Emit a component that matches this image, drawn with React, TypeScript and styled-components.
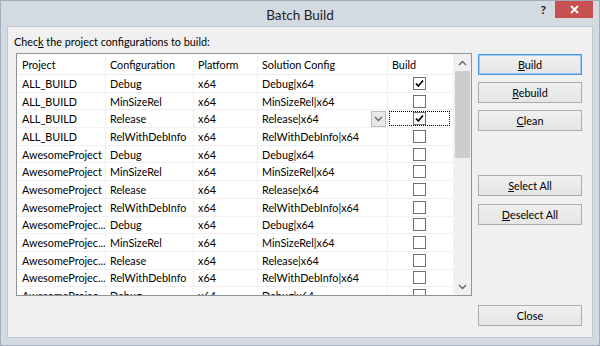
import React from "react";
import styled, { createGlobalStyle } from "styled-components";

type Row = {
  project: string;
  config: string;
  platform: string;
  solution: string;
  build: boolean;
};

const GlobalStyle = createGlobalStyle`
  html, body { margin: 0; padding: 0; background: #fff; }
  body {
    font-family: "Lato", "Segoe UI", sans-serif;
    font-size: 10.8px;
    color: #000;
  }
`;

const Window = styled.div`
  width: 600px;
  height: 346px;
  box-sizing: border-box;
  border: 1px solid #a3adb9;
  background: #d4dae2;
  padding: 0 6px 7px;
  display: flex;
  flex-direction: column;
`;

const TitleBar = styled.div`
  height: 25px;
  flex: none;
  display: grid;
  grid-template-columns: 1fr auto 1fr;
  align-items: start;
`;

const Title = styled.div`
  grid-column: 2;
  font-size: 13.5px;
  line-height: 28px;
  color: #1f1f1f;
`;

const Caption = styled.div`
  grid-column: 3;
  display: flex;
  justify-content: flex-end;
  align-items: flex-start;
`;

const HelpGlyph = styled.span`
  font-size: 12px;
  font-weight: bold;
  line-height: 18px;
  margin-right: 9px;
  color: #222;
`;

const CloseButton = styled.div`
  width: 38px;
  height: 17px;
  background: #c75050;
  display: flex;
  align-items: center;
  justify-content: center;
`;

const Client = styled.div`
  flex: 1;
  border: 1px solid #c2c8d0;
  background: #f0f0f0;
  padding: 7px 0 0 6px;
`;

const Label = styled.div`
  line-height: 16px;
  margin-bottom: 3px;
`;

const Body = styled.div`
  display: flex;
  gap: 6px;
  margin-left: 2px;
`;

const ListBox = styled.div`
  width: 456px;
  height: 243px;
  box-sizing: border-box;
  border: 1px solid #8e939a;
  background: #fff;
  display: flex;
  overflow: hidden;
`;

const Grid = styled.div`
  width: 437px;
  flex: none;
  overflow: hidden;
`;

const HeaderRow = styled.div`
  display: flex;
  height: 21px;
  box-sizing: border-box;
  border-bottom: 1px solid #ececec;
`;

const DataRow = styled.div`
  display: flex;
  height: 17.7px;
  box-sizing: border-box;
  border-bottom: 1px solid #f0f0f0;
  flex: none;
`;

const Cell = styled.div<{ $w: number; $pad?: number }>`
  width: ${(p) => p.$w}px;
  flex: none;
  box-sizing: border-box;
  padding-left: ${(p) => p.$pad ?? 4}px;
  border-right: 1px solid #f0f0f0;
  display: flex;
  align-items: center;
  white-space: nowrap;
  overflow: hidden;
`;

const SolutionCell = styled(Cell)`
  justify-content: space-between;
  padding-right: 1px;
`;

const BuildCell = styled(Cell)`
  padding-left: 1px;
`;

const DropButton = styled.div`
  width: 15px;
  height: 16px;
  box-sizing: border-box;
  border: 1px solid #bcbcbc;
  background: #e8e8e8;
  display: flex;
  align-items: center;
  justify-content: center;
`;

const FocusBox = styled.div<{ $focused: boolean }>`
  width: 61px;
  height: 15px;
  box-sizing: border-box;
  border: 1px dotted ${(p) => (p.$focused ? "#000" : "transparent")};
  display: flex;
  align-items: center;
  justify-content: center;
`;

const Box = styled.div`
  width: 13px;
  height: 13px;
  box-sizing: border-box;
  border: 1px solid #707070;
  background: #fff;
  display: flex;
  align-items: center;
  justify-content: center;
`;

const ScrollBar = styled.div`
  width: 17px;
  flex: none;
  background: #f0f0f0;
  display: flex;
  flex-direction: column;
  align-items: center;
`;

const Arrow = styled.div`
  height: 17px;
  width: 17px;
  flex: none;
  display: flex;
  align-items: center;
  justify-content: center;
`;

const Thumb = styled.div`
  width: 15px;
  height: 87px;
  background: #cdcdcd;
  flex: none;
`;

const Track = styled.div`
  flex: 1;
`;

const Buttons = styled.div`
  width: 104px;
  display: flex;
  flex-direction: column;
`;

const Button = styled.div<{ $gap: number; $default?: boolean }>`
  height: 21px;
  margin-top: ${(p) => p.$gap}px;
  box-sizing: border-box;
  border: 1px solid ${(p) => (p.$default ? "#4a97e6" : "#acacac")};
  box-shadow: ${(p) => (p.$default ? "inset 0 0 0 1px #9cc9f5" : "none")};
  background: linear-gradient(#f0f0f0, #e5e5e5);
  display: flex;
  align-items: center;
  justify-content: center;
  line-height: 16px;
`;

const rows: Row[] = [
  { project: "ALL_BUILD", config: "Debug", platform: "x64", solution: "Debug|x64", build: true },
  { project: "ALL_BUILD", config: "MinSizeRel", platform: "x64", solution: "MinSizeRel|x64", build: false },
  { project: "ALL_BUILD", config: "Release", platform: "x64", solution: "Release|x64", build: true },
  { project: "ALL_BUILD", config: "RelWithDebInfo", platform: "x64", solution: "RelWithDebInfo|x64", build: false },
  { project: "AwesomeProject", config: "Debug", platform: "x64", solution: "Debug|x64", build: false },
  { project: "AwesomeProject", config: "MinSizeRel", platform: "x64", solution: "MinSizeRel|x64", build: false },
  { project: "AwesomeProject", config: "Release", platform: "x64", solution: "Release|x64", build: false },
  { project: "AwesomeProject", config: "RelWithDebInfo", platform: "x64", solution: "RelWithDebInfo|x64", build: false },
  { project: "AwesomeProjec...", config: "Debug", platform: "x64", solution: "Debug|x64", build: false },
  { project: "AwesomeProjec...", config: "MinSizeRel", platform: "x64", solution: "MinSizeRel|x64", build: false },
  { project: "AwesomeProjec...", config: "Release", platform: "x64", solution: "Release|x64", build: false },
  { project: "AwesomeProjec...", config: "RelWithDebInfo", platform: "x64", solution: "RelWithDebInfo|x64", build: false },
  { project: "AwesomeProjec...", config: "Debug", platform: "x64", solution: "Debug|x64", build: false },
];

const widths = [89, 88, 64, 130, 66];
const focusedRow = 2;

const Check = () => (
  <svg width="11" height="11" viewBox="0 0 11 11">
    <path d="M2 5.5 L4.3 8 L9 2.5" fill="none" stroke="#000" strokeWidth="1.8" />
  </svg>
);

const Chevron = ({ up, color }: { up?: boolean; color: string }) => (
  <svg width="9" height="6" viewBox="0 0 9 6">
    <path
      d={up ? "M1 5 L4.5 1.5 L8 5" : "M1 1 L4.5 4.5 L8 1"}
      fill="none"
      stroke={color}
      strokeWidth="1.3"
    />
  </svg>
);

export default function App() {
  return (
    <>
      <GlobalStyle />
      <Window>
        <TitleBar>
          <Title>Batch Build</Title>
          <Caption>
            <HelpGlyph>?</HelpGlyph>
            <CloseButton>
              <svg width="9" height="9" viewBox="0 0 9 9">
                <path d="M1 1 L8 8 M8 1 L1 8" stroke="#fff" strokeWidth="1.8" />
              </svg>
            </CloseButton>
          </Caption>
        </TitleBar>
        <Client>
          <Label>
            Chec<u>k</u> the project configurations to build:
          </Label>
          <Body>
            <ListBox>
              <Grid>
                <HeaderRow>
                  <Cell $w={widths[0]} $pad={5}>Project</Cell>
                  <Cell $w={widths[1]}>Configuration</Cell>
                  <Cell $w={widths[2]}>Platform</Cell>
                  <Cell $w={widths[3]}>Solution Config</Cell>
                  <Cell $w={widths[4]}>Build</Cell>
                </HeaderRow>
                {rows.map((r, i) => (
                  <DataRow key={i}>
                    <Cell $w={widths[0]} $pad={5}>{r.project}</Cell>
                    <Cell $w={widths[1]}>{r.config}</Cell>
                    <Cell $w={widths[2]}>{r.platform}</Cell>
                    <SolutionCell $w={widths[3]}>
                      <span>{r.solution}</span>
                      {i === focusedRow && (
                        <DropButton>
                          <Chevron color="#606060" />
                        </DropButton>
                      )}
                    </SolutionCell>
                    <BuildCell $w={widths[4]}>
                      <FocusBox $focused={i === focusedRow}>
                        <Box>{r.build && <Check />}</Box>
                      </FocusBox>
                    </BuildCell>
                  </DataRow>
                ))}
              </Grid>
              <ScrollBar>
                <Arrow>
                  <Chevron up color="#606060" />
                </Arrow>
                <Thumb />
                <Track />
                <Arrow>
                  <Chevron color="#606060" />
                </Arrow>
              </ScrollBar>
            </ListBox>
            <Buttons>
              <Button $gap={1} $default>
                <span><u>B</u>uild</span>
              </Button>
              <Button $gap={7}>
                <span><u>R</u>ebuild</span>
              </Button>
              <Button $gap={7}>
                <span><u>C</u>lean</span>
              </Button>
              <Button $gap={44}>
                <span><u>S</u>elect All</span>
              </Button>
              <Button $gap={8}>
                <span><u>D</u>eselect All</span>
              </Button>
              <Button $gap={80}>
                <span>Close</span>
              </Button>
            </Buttons>
          </Body>
        </Client>
      </Window>
    </>
  );
}
